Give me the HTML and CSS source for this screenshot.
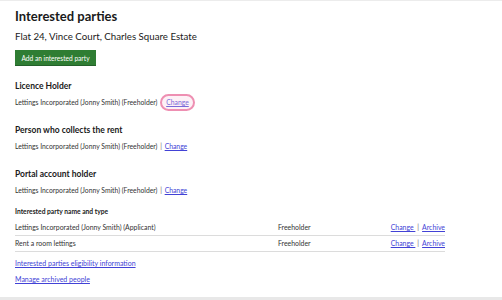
FILE: index.html
```
<!DOCTYPE html>
<html lang="en">
<head>
    <meta charset="UTF-8">
    <meta name="viewport" content="width=device-width, initial-scale=1.0">
    <title>Interested parties</title>
    <link rel="stylesheet" href="styles.css">
</head>
<body>
    <div class="page">
        <h1>Interested parties</h1>
        <p class="address">Flat 24, Vince Court, Charles Square Estate</p>
        <button class="btn">Add an interested party</button>

        <!-- Licence holder -->
        <h2 class="first">Licence Holder</h2>
        <p class="detail">Lettings Incorporated (Jonny Smith) (Freeholder) <a href="#" class="focus">Change</a></p>

        <h2>Person who collects the rent</h2>
        <p class="detail">Lettings Incorporated (Jonny Smith) (Freeholder) <span class="sep">|</span> <a href="#">Change</a></p>

        <h2>Portal account holder</h2>
        <p class="detail">Lettings Incorporated (Jonny Smith) (Freeholder) <span class="sep">|</span> <a href="#">Change</a></p>

        <!-- Parties table -->
        <div class="table">
            <div class="thead">Interested party name and type</div>
            <div class="row">
                <span class="name">Lettings Incorporated (Jonny Smith) (Applicant)</span>
                <span class="type">Freeholder</span>
                <span class="actions"><a href="#">Change </a><span class="sep">|</span><a href="#">Archive</a></span>
            </div>
            <div class="row">
                <span class="name">Rent a room lettings</span>
                <span class="type">Freeholder</span>
                <span class="actions"><a href="#">Change </a><span class="sep">|</span><a href="#">Archive</a></span>
            </div>
        </div>

        <p class="link"><a href="#">Interested parties eligibility information</a></p>
        <p class="link"><a href="#">Manage archived people</a></p>
    </div>
</body>
</html>
```

FILE: styles.css
```
body {
    font-family: Lato, "Noto Sans", sans-serif;
    margin: 0;
    background-color: #e8e8e8;
    color: #1a1a1a;
}
.page {
    box-sizing: border-box;
    background: white;
    border-top: 1px solid #ececec;
    padding: 7px 15px 0 15px;
    height: 297px;
    overflow: hidden;
}
h1 {
    font-size: 13px;
    margin: 0;
    line-height: 16px;
}
.address {
    font-size: 9.7px;
    margin: 6px 0 0 0;
    line-height: 12px;
}
.btn {
    display: block;
    margin-top: 8px;
    background: #2f7d33;
    color: white;
    border: none;
    box-shadow: 0 1px 0 #24602a;
    font-family: inherit;
    font-size: 6.6px;
    padding: 0 5px;
    width: 81px;
    height: 15px;
}
h2 {
    font-size: 8.5px;
    margin: 13px 0 0 0;
    line-height: 12px;
}
h2.first {
    margin-top: 15px;
}
.detail {
    font-size: 6.8px;
    margin: 2px 0 0 0;
    line-height: 17px;
    color: #333;
}
a {
    color: #4242d6;
}
.sep {
    color: #666;
    margin: 0 1px;
}
.focus {
    display: inline-block;
    line-height: 13px;
    padding: 0 4px;
    border: 2px solid #ee8fb2;
    border-radius: 9px;
    background: #fdf1f6;
    color: #7a6ad8;
    margin-left: 1px;
}
.table {
    width: 430px;
    margin-top: 6px;
    font-size: 6.9px;
    color: #333;
}
.thead {
    font-weight: bold;
    font-size: 6.7px;
    line-height: 12px;
    margin-bottom: 3px;
    color: #1a1a1a;
}
.row {
    display: flex;
    border-bottom: 1px solid #dcdcdc;
    line-height: 15px;
}
.name {
    width: 263px;
}
.type {
    flex: 1;
}
.actions .sep {
    margin: 0 3px 0 2px;
}
.link {
    font-size: 7px;
    margin: 6px 0 0 0;
    line-height: 10px;
}
```
